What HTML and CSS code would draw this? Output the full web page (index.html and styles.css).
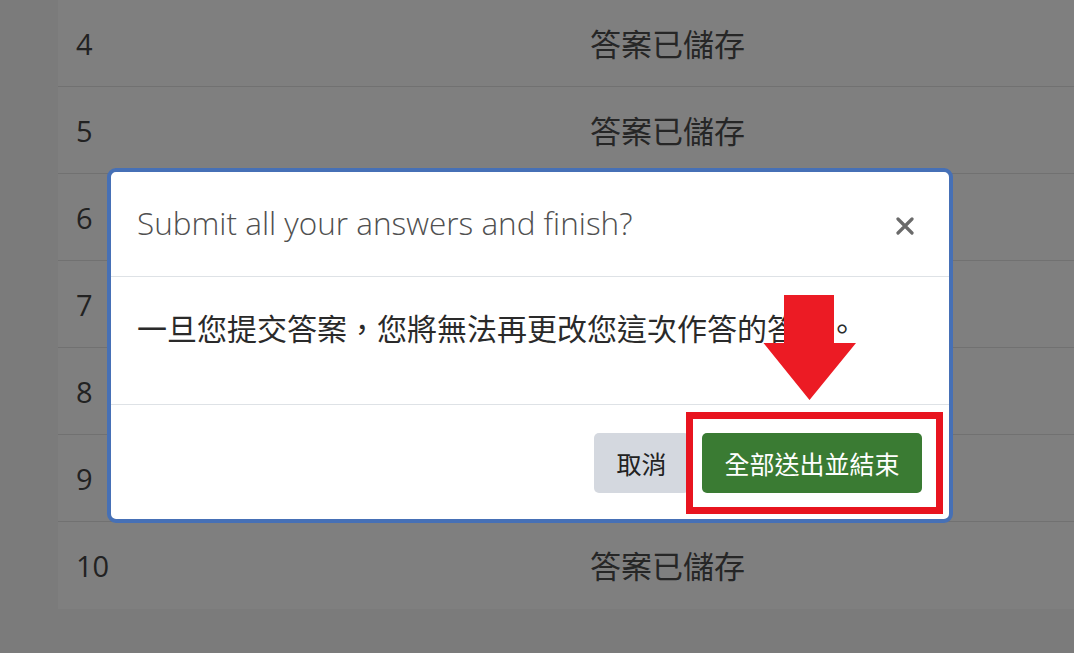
FILE: index.html
```html
<!DOCTYPE html>
<html lang="zh-Hant">
<head>
<meta charset="utf-8">
<title>Submit</title>
<link rel="stylesheet" href="styles.css">
</head>
<body>
<div class="page">
  <div class="table">
    <div class="row"><div class="num">4</div><div class="status">答案已儲存</div></div>
    <div class="row"><div class="num">5</div><div class="status">答案已儲存</div></div>
    <div class="row"><div class="num">6</div><div class="status covered">答案已儲存</div></div>
    <div class="row"><div class="num">7</div><div class="status covered">答案已儲存</div></div>
    <div class="row"><div class="num">8</div><div class="status covered">答案已儲存</div></div>
    <div class="row"><div class="num">9</div><div class="status covered">答案已儲存</div></div>
    <div class="row last"><div class="num">10</div><div class="status">答案已儲存</div></div>
  </div>

  <div class="modal">
    <div class="modal-header">
      <h5 class="modal-title">Submit all your answers and finish?</h5>
      <svg class="close" width="18" height="18" viewBox="0 0 18 18"><path d="M2 2 L16 16 M16 2 L2 16" stroke="#6a6a6a" stroke-width="3.2" stroke-linecap="round"/></svg>
    </div>
    <div class="modal-body">一旦您提交答案，您將無法再更改您這次作答的答案。</div>
    <div class="modal-footer">
      <button class="btn btn-cancel">取消</button>
      <button class="btn btn-submit">全部送出並結束</button>
    </div>
  </div>

  <div class="highlight"></div>
  <svg class="arrow" width="94" height="107" viewBox="0 0 94 107"><polygon points="21,1 71,1 71,49 93,49 46.5,106 0.5,49 21,49" fill="#ec1b24"/></svg>
</div>
</body>
</html>
```
FILE: styles.css
```css
html, body {
  margin: 0;
  padding: 0;
}
body {
  background: #7b7b7b;
  font-family: "Open Sans", "Noto Sans CJK TC", sans-serif;
  color: #1f1f1f;
  width: 1074px;
  height: 653px;
  overflow: hidden;
}
.page {
  position: relative;
  width: 1074px;
  height: 653px;
}
.table {
  margin-left: 58px;
  background: #7f7f7f;
}
.row {
  display: grid;
  grid-template-columns: 532px 1fr;
  height: 86px;
  align-items: center;
  border-bottom: 1px solid #717171;
}
.row.last {
  border-bottom: none;
  height: 87px;
}
.num {
  padding-left: 18px;
  font-size: 29px;
  color: #222;
}
.status {
  font-family: "Noto Sans CJK TC", sans-serif;
  font-size: 31px;
  color: #262626;
  margin-top: -2px;
}
.status.covered {
  visibility: hidden;
}
.modal {
  position: absolute;
  left: 107px;
  top: 168px;
  width: 846px;
  height: 355px;
  box-sizing: border-box;
  border: 4px solid #4670b6;
  border-radius: 9px;
  background: #fff;
  display: flex;
  flex-direction: column;
}
.modal-header {
  height: 105px;
  box-sizing: border-box;
  border-bottom: 1px solid #dee2e6;
  display: flex;
  align-items: center;
  justify-content: space-between;
  padding: 0 35px 0 26px;
}
.modal-title {
  margin: 0;
  font-weight: 300;
  font-size: 31.5px;
  color: #505050;
  margin-top: -4px;
}
.close {
  margin-top: 4px;
}
.modal-body {
  height: 128px;
  box-sizing: border-box;
  border-bottom: 1px solid #dee2e6;
  padding: 28px 0 0 26px;
  font-family: "Noto Sans CJK TC", sans-serif;
  font-size: 30px;
  line-height: 45px;
  color: #2a2a2a;
}
.modal-footer {
  flex: 1;
  display: flex;
  justify-content: flex-end;
  align-items: flex-start;
  gap: 13px;
  padding: 28px 27px 0 0;
}
.btn {
  height: 60px;
  border: none;
  border-radius: 5px;
  font-family: "Noto Sans CJK TC", sans-serif;
  font-size: 25px;
  padding: 0 22px;
  line-height: 60px;
}
.btn-cancel {
  background: #d4d8df;
  color: #222;
  width: 95px;
}
.btn-submit {
  background: #3a7b33;
  color: #fff;
  width: 220px;
}
.highlight {
  position: absolute;
  left: 686px;
  top: 412px;
  width: 257px;
  height: 102px;
  box-sizing: border-box;
  border: 7px solid #e8141f;
}
.arrow {
  position: absolute;
  left: 763px;
  top: 294px;
}
```
